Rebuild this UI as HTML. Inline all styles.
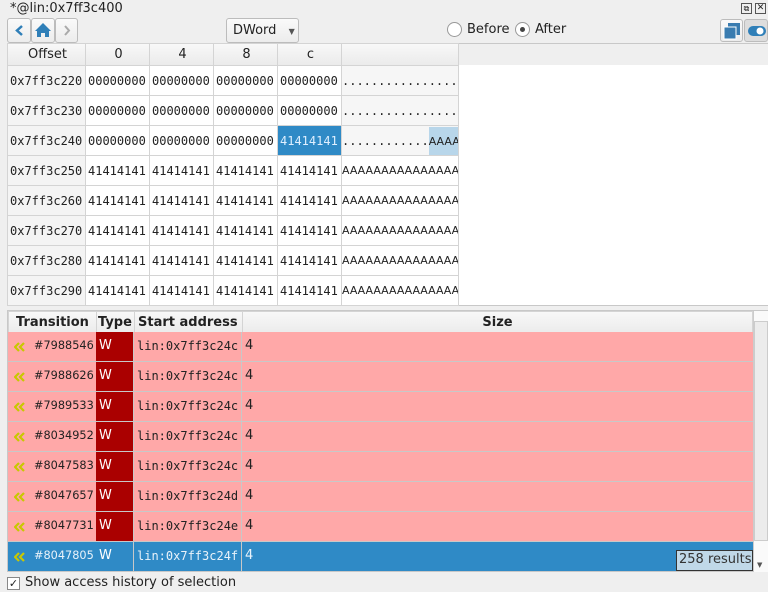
<!DOCTYPE html>
<html><head><style>
*{margin:0;padding:0;box-sizing:border-box}
body{width:768px;height:592px;background:#efefef;font-family:"DejaVu Sans","Liberation Sans",sans-serif;font-size:13px;color:#222;position:relative;overflow:hidden}
.a{position:absolute}
.btn{position:absolute;border:1px solid #bcbcbc;border-radius:3px;background:linear-gradient(#fafafa,#ececec)}
.mono{font-family:"DejaVu Sans Mono","Liberation Mono",monospace;font-size:12px}
table{border-collapse:collapse;position:absolute;table-layout:fixed}
td{border:1px solid #d4d4d4;padding:0;white-space:nowrap;overflow:hidden}
.hx td{padding-left:2px}
</style></head><body>
<div class="a" style="left:10px;top:1px">*@lin:0x7ff3c400</div>
<div class="a" style="left:741px;top:3px;width:11px;height:11px;border:1px solid #555;font-size:8px;line-height:9px;text-align:center">⧉</div>
<div class="a" style="left:755px;top:3px;width:11px;height:11px;border:1px solid #555;font-size:9px;line-height:9px;text-align:center">✕</div>
<div class="btn" style="left:7px;top:18px;width:24px;height:25px"><svg width="22" height="23"><path d="M14 7 L9 11.5 L14 16" stroke="#2f7fb8" stroke-width="2.5" fill="none"/></svg></div>
<div class="btn" style="left:31px;top:18px;width:24px;height:25px"><svg width="22" height="23"><path d="M3 12 L11 4 L19 12 L17 12 L17 18 L13 18 L13 14 L9 14 L9 18 L5 18 L5 12Z" fill="#2f7fb8"/></svg></div>
<div class="btn" style="left:55px;top:18px;width:23px;height:25px"><svg width="22" height="23"><path d="M9 7 L13 11.5 L9 16" stroke="#aaa" stroke-width="2" fill="none"/></svg></div>
<div class="btn" style="left:226px;top:18px;width:73px;height:25px;padding:4px 0 0 6px">DWord <span style="font-size:8px;color:#555;margin-left:8px">▼</span></div>
<div class="a" style="left:447px;top:22px;width:15px;height:15px;border:1px solid #999;border-radius:50%;background:#fff"></div>
<div class="a" style="left:467px;top:22px">Before</div>
<div class="a" style="left:515px;top:22px;width:15px;height:15px;border:1px solid #999;border-radius:50%;background:#fff"><div style="margin:4px;width:5px;height:5px;border-radius:50%;background:#444"></div></div>
<div class="a" style="left:535px;top:22px">After</div>
<div class="btn" style="left:720px;top:19px;width:23px;height:23px"><svg width="22" height="22"><rect x="7" y="3" width="12" height="12" fill="#3a7cb0"/><rect x="3" y="7" width="12" height="12" fill="#3a7cb0" stroke="#fff" stroke-width="1"/></svg></div>
<div class="btn" style="left:744px;top:19px;width:24px;height:23px;background:#ddd"><svg width="22" height="22"><rect x="3" y="6" width="18" height="10" rx="5" fill="#2f7fb8"/><circle cx="15" cy="11" r="3.5" fill="#fff"/></svg></div>

<div class="a" style="left:7px;top:43px;width:761px;height:263px;background:#fff;border-left:1px solid #c8c8c8;border-bottom:1px solid #c8c8c8"></div>
<div class="a" style="left:457px;top:43px;width:311px;height:22px;background:#efefef;border-top:1px solid #c8c8c8"></div>
<table class="mono hx" style="left:7px;top:43px;width:451px">
<colgroup><col style="width:78px"><col style="width:64px"><col style="width:64px"><col style="width:64px"><col style="width:64px"><col style="width:117px"></colgroup>
<tr style="height:22px;background:linear-gradient(#f8f8f8,#eaeaea);font-family:'DejaVu Sans',sans-serif;font-size:13px;text-align:center"><td>Offset</td><td>0</td><td>4</td><td>8</td><td>c</td><td></td></tr>
<tr style="height:30px"><td style="background:#f4f4f4">0x7ff3c220</td><td>00000000</td><td>00000000</td><td>00000000</td><td>00000000</td><td style="background:#f6f6f6;padding:0">................</td></tr>
<tr style="height:30px"><td style="background:#f4f4f4">0x7ff3c230</td><td>00000000</td><td>00000000</td><td>00000000</td><td>00000000</td><td style="background:#f6f6f6;padding:0">................</td></tr>
<tr style="height:30px"><td style="background:#f4f4f4">0x7ff3c240</td><td>00000000</td><td>00000000</td><td>00000000</td><td style="background:#2f8ac6;color:#dfefff">41414141</td><td style="background:#f6f6f6;padding:0">............<span style="background:#b8d6ea;font-family:'DejaVu Sans',sans-serif;font-size:11px;padding:8px 0">AAAA</span></td></tr>
<tr style="height:30px"><td style="background:#f4f4f4">0x7ff3c250</td><td>41414141</td><td>41414141</td><td>41414141</td><td>41414141</td><td style="font-family:'DejaVu Sans',sans-serif;font-size:11px;padding:0">AAAAAAAAAAAAAAAA</td></tr>
<tr style="height:30px"><td style="background:#f4f4f4">0x7ff3c260</td><td>41414141</td><td>41414141</td><td>41414141</td><td>41414141</td><td style="font-family:'DejaVu Sans',sans-serif;font-size:11px;padding:0">AAAAAAAAAAAAAAAA</td></tr>
<tr style="height:30px"><td style="background:#f4f4f4">0x7ff3c270</td><td>41414141</td><td>41414141</td><td>41414141</td><td>41414141</td><td style="font-family:'DejaVu Sans',sans-serif;font-size:11px;padding:0">AAAAAAAAAAAAAAAA</td></tr>
<tr style="height:30px"><td style="background:#f4f4f4">0x7ff3c280</td><td>41414141</td><td>41414141</td><td>41414141</td><td>41414141</td><td style="font-family:'DejaVu Sans',sans-serif;font-size:11px;padding:0">AAAAAAAAAAAAAAAA</td></tr>
<tr style="height:30px"><td style="background:#f4f4f4">0x7ff3c290</td><td>41414141</td><td>41414141</td><td>41414141</td><td>41414141</td><td style="font-family:'DejaVu Sans',sans-serif;font-size:11px;padding:0">AAAAAAAAAAAAAAAA</td></tr>
</table>

<div class="a" style="left:7px;top:310px;width:761px;height:262px;background:#fff;border:1px solid #c8c8c8"></div>
<table style="left:8px;top:311px;width:745px">
<colgroup><col style="width:88px"><col style="width:38px"><col style="width:108px"><col></colgroup>
<tr style="height:21px;font-weight:bold;background:linear-gradient(#f8f8f8,#ebebeb)"><td style="padding-left:7px">Transition</td><td style="padding-left:1px">Type</td><td style="padding-left:3px">Start address</td><td style="text-align:center">Size</td></tr>
</table>
<div class="a" id="rows" style="left:8px;top:332px;width:745px"></div>
<div class="a" style="left:753px;top:311px;width:15px;height:261px;background:#fafafa;border-left:1px solid #ccc"><div style="margin-top:10px;height:220px;background:#ececec;border:1px solid #ccc"></div><div style="position:absolute;bottom:3px;left:3px;font-size:7px;color:#555">▼</div></div>
<div class="a" style="left:676px;top:550px;width:77px;height:21px;background:#c0d8e8;border:1px solid #333;color:#333;padding:1px 0 0 2px">258 results</div>
<div class="a" style="left:7px;top:577px;width:13px;height:13px;border:1px solid #888;background:#fff;font-size:11px;line-height:11px;text-align:center">✓</div>
<div class="a" style="left:25px;top:575px">Show access history of selection</div>
<script>
var d=[["7988546","c"],["7988626","c"],["7989533","c"],["8034952","c"],["8047583","c"],["8047657","d"],["8047731","e"],["8047805","f"]],h="";
d.forEach(function(r,i){var s=i==7;h+='<div style="position:absolute;top:'+(i*30)+'px;left:0;width:745px;height:30px;font-size:13px;background:'+(s?'#2f8ac6':'#ffa8a8')+';border-bottom:1px solid #c8c8c8;color:'+(s?'#e8f2fa':'#222')+'">'+
'<svg style="position:absolute;left:6px;top:10px" width="12" height="10"><path d="M5 1 L1 5 L5 9 M10 1 L6 5 L10 9" stroke="#c8c800" stroke-width="2.2" fill="none"/></svg><span style="position:absolute;left:26px;top:7px;font-size:11.3px">#'+r[0]+'</span>'+
'<span style="position:absolute;left:88px;top:0;width:37px;height:29px;background:'+(s?'transparent':'#aa0000')+';color:#fff;padding:6px 0 0 3px">W</span>'+
'<span style="position:absolute;left:129px;top:7px;font-family:\'DejaVu Sans Mono\',monospace;font-size:12px">lin:0x7ff3c24'+r[1]+'</span><span style="position:absolute;left:237px;top:6px">4</span>'+
'<span style="position:absolute;left:125px;top:0;height:30px;border-left:1px solid #c8c8c8"></span><span style="position:absolute;left:233px;top:0;height:30px;border-left:1px solid #c8c8c8"></span></div>'});
document.getElementById('rows').innerHTML=h;
</script>
</body></html>
